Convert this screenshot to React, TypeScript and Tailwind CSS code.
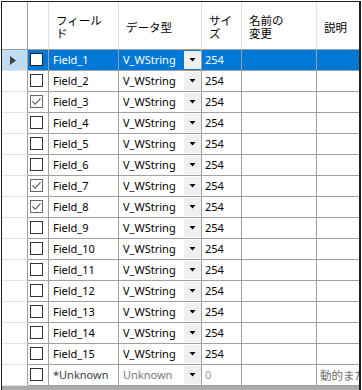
import React from "react";

const FONT = '"Segoe UI", "Noto Sans", "Noto Sans CJK JP", sans-serif';
const JFONT = '"Noto Sans CJK JP", "Noto Sans", sans-serif';

type Row = { name: string; checked: boolean; type: string; size: string; desc?: string; unknown?: boolean };

const rows: Row[] = [
  ...Array.from({ length: 15 }, (_, i) => ({
    name: `Field_${i + 1}`,
    checked: [3, 7, 8].includes(i + 1),
    type: "V_WString",
    size: "254",
  })),
  { name: "*Unknown", checked: false, type: "Unknown", size: "0", desc: "動的または不明", unknown: true },
];

function Check({ checked, selected }: { checked: boolean; selected: boolean }) {
  return (
    <div
      className={
        "w-[13px] h-[13px] border flex items-center justify-center " +
        (checked ? "border-[#666666] bg-white" : selected ? "border-[#222222] bg-white" : "border-[#333333] bg-white")
      }
    >
      {checked && (
        <svg width="11" height="11" viewBox="0 0 11 11">
          <polyline points="1.5,5.5 4.3,8.3 9.5,2.3" fill="none" stroke="#555555" strokeWidth="1.1" />
        </svg>
      )}
    </div>
  );
}

function DropBtn() {
  return (
    <div className="w-[17px] self-stretch my-px bg-[#f0f0f0] flex items-center justify-center shrink-0">
      <svg width="7" height="4" viewBox="0 0 7 4">
        <polygon points="0.5,0 6.5,0 3.5,3.5" fill="#000000" />
      </svg>
    </div>
  );
}

function HeaderCell({ w, lines, dark }: { w: string; lines: string[]; dark?: boolean }) {
  return (
    <div
      className={
        w +
        " shrink-0 h-full border-b border-b-[#a0a0a0] border-r flex items-center pl-[7px] pt-[3px] " +
        (dark ? "border-r-[#a0a0a0]" : "border-r-[#e3e3e3]")
      }
    >
      <div className="flex flex-col text-[11.5px] text-black" style={{ fontFamily: JFONT }}>
        {lines.map((l, i) => (
          <div key={i} className="h-[13px] leading-[13px] whitespace-nowrap">
            {l}
          </div>
        ))}
      </div>
    </div>
  );
}

export default function App() {
  return (
    <div className="w-[362px] h-[390px] bg-white pl-px pt-px overflow-hidden" style={{ fontFamily: FONT }}>
      <div className="w-[360px] h-[389px] border-l border-t border-r-2 border-[#1e1e1e] bg-[#ababab] flex flex-col overflow-hidden">
        <div className="flex h-[48px] bg-white shrink-0">
          <div className="w-[26px] shrink-0 h-full border-b border-b-[#a0a0a0] border-r border-r-[#a0a0a0]" />
          <div className="w-[21px] shrink-0 h-full border-b border-b-[#a0a0a0] border-r border-r-[#e3e3e3]" />
          <HeaderCell w="w-[70px]" lines={["フィール", "ド"]} />
          <HeaderCell w="w-[83px]" lines={["データ型"]} />
          <HeaderCell w="w-[40px]" lines={["サイ", "ズ"]} />
          <HeaderCell w="w-[75px]" lines={["名前の", "変更"]} />
          <HeaderCell w="w-[80px]" lines={["説明"]} />
        </div>
        {rows.map((r, i) => {
          const sel = i === 0;
          const cell = "shrink-0 h-full border-b border-r border-[#a0a0a0] " + (sel ? "bg-[#0078d7] " : "bg-white ");
          const txt = sel ? "text-white" : "text-black";
          return (
            <div key={i} className="flex h-[21px] shrink-0 text-[11px] leading-[14px]">
              <div
                className={
                  "w-[26px] shrink-0 h-full border-r border-r-[#a0a0a0] border-b border-b-[#e3e3e3] flex items-center pl-[8px] " +
                  (sel ? "bg-[#bfdcf3]" : "bg-white")
                }
              >
                {sel && (
                  <svg width="6" height="9" viewBox="0 0 6 9">
                    <polygon points="0,0 6,4.5 0,9" fill="#404040" />
                  </svg>
                )}
              </div>
              <div className={cell + "w-[21px] flex items-start pt-[3px] pl-[2px]"}>
                <Check checked={r.checked} selected={sel} />
              </div>
              <div
                className={
                  cell +
                  "w-[70px] flex items-center pl-[4px] " +
                  (r.unknown ? "text-[#3c3c3c]" : txt)
                }
              >
                {r.name}
              </div>
              <div className={cell + "w-[83px] flex items-center pl-[4px]"}>
                <span className={"flex-1 " + (r.unknown ? "text-[#7a7a7a]" : txt)}>{r.type}</span>
                <DropBtn />
              </div>
              <div className={cell + "w-[40px] flex items-center pl-[3px] " + (r.unknown ? "text-[#8a9bb8]" : txt)}>
                {r.size}
              </div>
              <div className={cell + "w-[75px]"} />
              <div
                className={cell + "w-[80px] flex items-center pl-[3px] overflow-hidden whitespace-nowrap text-[#6d6d6d] text-[11.5px]"}
                style={{ fontFamily: JFONT }}
              >
                {r.desc ?? ""}
              </div>
            </div>
          );
        })}
      </div>
    </div>
  );
}
